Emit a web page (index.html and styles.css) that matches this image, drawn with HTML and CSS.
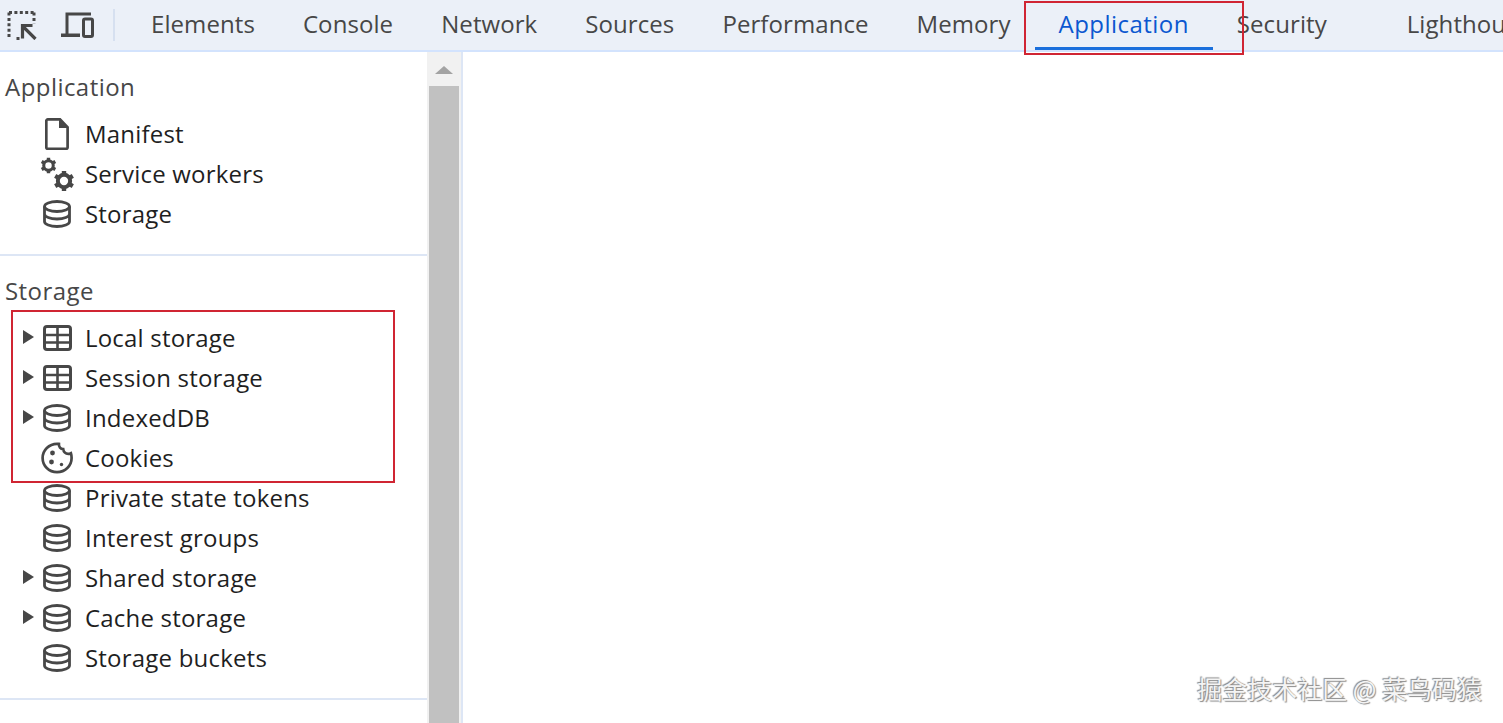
FILE: index.html
```html
<!DOCTYPE html>
<html lang="en">
<head>
    <meta charset="UTF-8">
    <title>DevTools Application panel</title>
    <link rel="stylesheet" href="styles.css">
</head>
<body>
    <svg class="icon-defs" width="0" height="0">
        <symbol id="i-db" viewBox="0 0 28 28">
            <ellipse cx="14" cy="6.500" rx="12.500" ry="5" fill="none" stroke="currentColor" stroke-width="2.800"/>
            <path d="M1.500 6.500v15c0 2.800 5.600 5 12.500 5s12.500-2.200 12.500-5v-15M1.500 14c0 2.800 5.600 5 12.500 5s12.500-2.200 12.500-5" fill="none" stroke="currentColor" stroke-width="2.800"/>
        </symbol>
        <symbol id="i-table" viewBox="0 0 29 26">
            <rect x="1.500" y="1.500" width="26" height="23" rx="2.500" fill="none" stroke="currentColor" stroke-width="3"/>
            <path d="M1 10h27M1 17.500h27M14.500 1v24" fill="none" stroke="currentColor" stroke-width="2.600"/>
        </symbol>
        <symbol id="i-file" viewBox="0 0 24 32">
            <path d="M2.800 1.400h12.200l7.600 8v20a1.500 1.500 0 0 1-1.500 1.500H2.800a1.500 1.500 0 0 1-1.500-1.500V2.900a1.500 1.500 0 0 1 1.500-1.500z" fill="none" stroke="currentColor" stroke-width="2.700"/>
            <path d="M14 1.500v8.500h8.500z" fill="currentColor"/>
        </symbol>
        <symbol id="i-gear" viewBox="0 0 20 20">
            <circle cx="10" cy="10" r="5.600" fill="none" stroke="currentColor" stroke-width="3.600"/>
            <path d="M10 .8v3.400M10 15.800v3.400M2 5.400l3 1.700M15 12.900l3 1.700M2 14.600l3-1.700M15 7.100l3-1.700" stroke="currentColor" stroke-width="4"/>
        </symbol>
        <symbol id="i-cookie" viewBox="0 0 32 32">
            <path d="M16 1.800c.6 0 1.300 0 1.900.1-.3 3.100 1.700 5.300 4.300 5.300.3 2.700 2.400 4.700 5 4.700.9 0 1.800-.2 2.700-.7.500 1.500.700 3.100.700 4.800 0 7.800-6.500 14.200-14.600 14.200S1.600 23.800 1.600 16 8 1.800 16 1.800z" fill="none" stroke="currentColor" stroke-width="2.700"/>
            <circle cx="11.500" cy="11" r="2.400" fill="currentColor"/>
            <circle cx="10.500" cy="20" r="2.400" fill="currentColor"/>
            <circle cx="20.500" cy="22.500" r="1.700" fill="currentColor"/>
        </symbol>
    </svg>

    <header class="toolbar">
        <div class="tool-icons">
            <svg class="tool-icon tool-inspect" width="30" height="30" viewBox="0 0 30 30">
                <path d="M2 2.500h26.500M2 2.500v26" fill="none" stroke="#474747" stroke-width="3" stroke-dasharray="3 2.400"/>
                <path d="M27 2.500v11" fill="none" stroke="#474747" stroke-width="3" stroke-dasharray="3 2.400"/>
                <path d="M9.500 28.500h4" fill="none" stroke="#474747" stroke-width="3" stroke-dasharray="3 2.400"/>
                <path d="M25.500 15.500H15.500v13M15 15.500l13.500 13.500" fill="none" stroke="#474747" stroke-width="3.200"/>
            </svg>
            <svg class="tool-icon tool-device" width="34" height="26" viewBox="0 0 34 26">
                <path d="M7 22V2h24" fill="none" stroke="#474747" stroke-width="3"/>
                <path d="M1 21.500h19V25H1z" fill="#474747"/>
                <rect x="23.500" y="7" width="9" height="17.500" rx="1.500" fill="none" stroke="#474747" stroke-width="3"/>
            </svg>
            <span class="tool-sep"></span>
        </div>
        <nav class="tabs">
            <a class="tab">Elements</a>
            <a class="tab">Console</a>
            <a class="tab">Network</a>
            <a class="tab">Sources</a>
            <a class="tab">Performance</a>
            <a class="tab">Memory</a>
            <a class="tab active">Application</a>
            <a class="tab">Security</a>
            <a class="tab tab-far">Lighthouse</a>
        </nav>
    </header>
    <div class="mark mark-tab"></div>

    <div class="panel">
        <aside class="sidebar">
            <section class="group">
                <h3>Application</h3>
                <ul>
                    <li><svg class="ic ic-file"><use href="#i-file"/></svg>Manifest</li>
                    <li>
                        <span class="ic ic-gears">
                            <svg class="gear-small"><use href="#i-gear"/></svg>
                            <svg class="gear-big"><use href="#i-gear"/></svg>
                        </span>Service workers
                    </li>
                    <li><svg class="ic"><use href="#i-db"/></svg>Storage</li>
                </ul>
            </section>
            <section class="group">
                <h3>Storage</h3>
                <ul>
                    <li class="has-kids"><svg class="ic ic-table"><use href="#i-table"/></svg>Local storage</li>
                    <li class="has-kids"><svg class="ic ic-table"><use href="#i-table"/></svg>Session storage</li>
                    <li class="has-kids"><svg class="ic"><use href="#i-db"/></svg>IndexedDB</li>
                    <li><svg class="ic ic-cookie"><use href="#i-cookie"/></svg>Cookies</li>
                    <li><svg class="ic"><use href="#i-db"/></svg>Private state tokens</li>
                    <li><svg class="ic"><use href="#i-db"/></svg>Interest groups</li>
                    <li class="has-kids"><svg class="ic"><use href="#i-db"/></svg>Shared storage</li>
                    <li class="has-kids"><svg class="ic"><use href="#i-db"/></svg>Cache storage</li>
                    <li><svg class="ic"><use href="#i-db"/></svg>Storage buckets</li>
                </ul>
            </section>
            <div class="mark mark-rows"></div>
        </aside>
        <div class="scrollbar">
            <span class="scroll-up"></span>
            <span class="scroll-thumb"></span>
        </div>
        <main class="content"></main>
    </div>

    <div class="watermark">掘金技术社区 @ 菜鸟码猿</div>
</body>
</html>
```

FILE: styles.css
```css
* {
    margin: 0;
    padding: 0;
    box-sizing: border-box;
}

body {
    height: 100vh;
    overflow: hidden;
    display: flex;
    flex-direction: column;
    background-color: #ffffff;
    font-family: "Open Sans", "Noto Sans", sans-serif;
    color: #1f1f1f;
}

.icon-defs {
    position: absolute;
}

.toolbar {
    display: flex;
    align-items: stretch;
    flex: none;
    height: 52px;
    background-color: #ebf0f8;
    border-bottom: 2px solid #d3e3fd;
    overflow: hidden;
}

.tool-icons {
    display: flex;
    align-items: center;
    width: 127px;
    flex: none;
    padding-left: 7px;
}

.tool-icon {
    flex: none;
}

.tool-inspect {
    margin-right: 23px;
}

.tool-device {
    margin-right: 19px;
}

.tool-sep {
    width: 2px;
    height: 32px;
    background-color: #d6e0f0;
}

.tabs {
    display: flex;
    flex: none;
}

.tab {
    position: relative;
    display: flex;
    align-items: center;
    padding: 0 24px 4px;
    font-size: 24px;
    letter-spacing: 0.08px;
    color: #474747;
    white-space: nowrap;
}

.tab.active {
    color: #0b57d0;
    letter-spacing: 0.45px;
}

.tab.active::after {
    content: "";
    position: absolute;
    left: 0;
    right: 0;
    bottom: 0;
    height: 3px;
    background-color: #1a6fdc;
}

.tab-far {
    margin-left: 32px;
}

.mark {
    position: absolute;
    border: 2px solid #d02533;
}

.mark-tab {
    left: 1024px;
    top: 1px;
    width: 220px;
    height: 54px;
}

.mark-rows {
    left: 11px;
    top: 310px;
    width: 384px;
    height: 173px;
}

.panel {
    display: flex;
    flex: 1;
    min-height: 0;
}

.sidebar {
    width: 427px;
    flex: none;
}

.group {
    padding-bottom: 20px;
    border-bottom: 2px solid #dde6f5;
}

.group h3 {
    height: 40px;
    padding: 15px 0 0 5px;
    margin-bottom: 22px;
    font-size: 24px;
    font-weight: 400;
    line-height: 40px;
    letter-spacing: 0.45px;
    color: #474747;
}

.group ul {
    list-style: none;
}

.group li {
    position: relative;
    display: flex;
    align-items: center;
    height: 40px;
    padding: 0 0 2px 85px;
    font-size: 24px;
    letter-spacing: 0.2px;
    white-space: nowrap;
}

.has-kids::before {
    content: "";
    position: absolute;
    left: 23px;
    top: 12px;
    border-left: 11px solid #474747;
    border-top: 7.5px solid transparent;
    border-bottom: 7.5px solid transparent;
}

.ic {
    position: absolute;
    left: 43px;
    top: 6px;
    width: 28px;
    height: 28px;
    color: #474747;
}

.ic-table {
    left: 43px;
    top: 7px;
    width: 29px;
    height: 26px;
}

.ic-file {
    left: 45px;
    top: 4px;
    width: 24px;
    height: 32px;
}

.ic-cookie {
    left: 41px;
    top: 4px;
    width: 32px;
    height: 32px;
}

.ic-gears {
    left: 40px;
    top: 3px;
    width: 36px;
    height: 36px;
}

.ic-gears svg {
    position: absolute;
    display: block;
    color: #474747;
}

.gear-small {
    left: 0;
    top: 0;
    width: 17px;
    height: 17px;
}

.gear-big {
    left: 13px;
    top: 13px;
    width: 22px;
    height: 22px;
}

.scrollbar {
    position: relative;
    flex: none;
    width: 34px;
    padding: 34px 2px 0;
    background-color: #f1f1f1;
    display: flex;
    flex-direction: column;
}

.scroll-up {
    position: absolute;
    left: 8px;
    top: 14px;
    border-bottom: 8px solid #a3a3a3;
    border-left: 9px solid transparent;
    border-right: 9px solid transparent;
}

.scroll-thumb {
    flex: 1;
    background-color: #c1c1c1;
}

.content {
    flex: 1;
    border-left: 2px solid #dde6f5;
}

.watermark {
    position: absolute;
    right: 21px;
    bottom: 18px;
    font-family: "Noto Sans CJK SC", sans-serif;
    font-size: 25px;
    line-height: 34px;
    color: #f4f4f4;
    text-shadow: -1px -1px 1px #8a8a8a, 1px 1px 1px #8a8a8a;
    white-space: nowrap;
}
```
